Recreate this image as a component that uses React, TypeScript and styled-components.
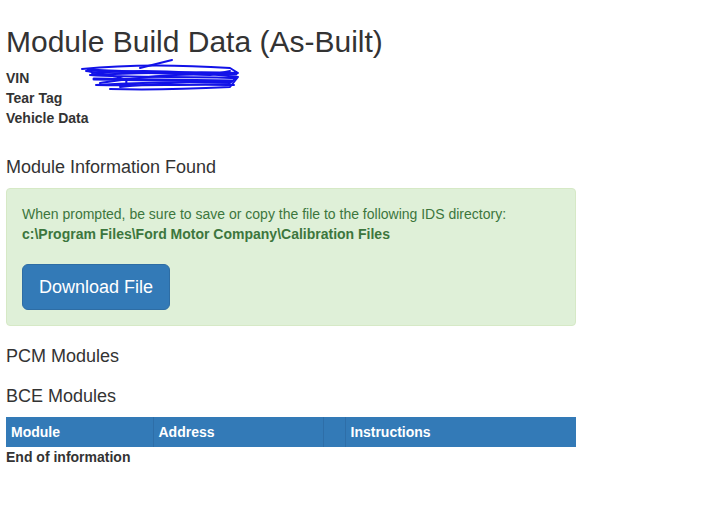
import React from 'react';
import styled, { createGlobalStyle } from 'styled-components';

const GlobalStyle = createGlobalStyle`
  body {
    margin: 0;
    background: #ffffff;
    font-family: "Liberation Sans", Arial, Helvetica, sans-serif;
    font-size: 14px;
    line-height: 20px;
    color: #333333;
  }
`;

const Page = styled.div`
  padding: 0 6px;
  width: 570px;
`;

const Title = styled.h1`
  margin: 25px 0 10px;
  font-size: 30px;
  font-weight: 400;
  line-height: 1.1;
  color: #333;
`;

const InfoList = styled.div`
  display: flex;
  flex-direction: column;
`;

const InfoRow = styled.div`
  display: flex;
  align-items: center;
  height: 20px;
  font-weight: 700;
  white-space: nowrap;
`;

const Label = styled.span`
  flex: none;
`;

const Section = styled.h3<{ $top: number }>`
  margin: ${(p) => p.$top}px 0 10px;
  font-size: 18px;
  font-weight: 400;
  line-height: 1.1;
  color: #333;
`;

const Alert = styled.div`
  background: #dff0d8;
  border: 1px solid #d6e9c6;
  border-radius: 4px;
  color: #3c763d;
  padding: 15px;
  margin-bottom: 21px;
`;

const AlertText = styled.p`
  margin: 0;
`;

const Path = styled.strong`
  display: block;
`;

const Button = styled.button`
  margin-top: 20px;
  display: inline-block;
  font-family: inherit;
  font-size: 18px;
  line-height: 24px;
  padding: 10px 16px;
  border-radius: 6px;
  border: 1px solid #2e6da4;
  background: #337ab7;
  color: #ffffff;
  cursor: pointer;
`;

const Table = styled.table`
  width: 100%;
  table-layout: fixed;
  border-collapse: collapse;
  margin-top: 11px;
`;

const Th = styled.th<{ $w?: number }>`
  box-sizing: border-box;
  background: #337ab7;
  color: #ffffff;
  text-align: left;
  font-weight: 700;
  height: 30px;
  padding: 0 5px;
  border-left: 1px solid #2e6ea8;
  width: ${(p) => (p.$w ? `${p.$w}px` : 'auto')};
  &:first-child {
    border-left: none;
  }
`;

const Footer = styled.div`
  font-weight: 700;
`;

const ScribbleMark = styled.svg`
  flex: none;
  margin-left: 50px;
  margin-top: -4px;
`;

const Scribble = () => (
  <ScribbleMark width="164" height="34" viewBox="0 0 162 34">
    <g fill="none" stroke="#1212e8" strokeWidth="2" strokeLinecap="round" strokeLinejoin="round">
      <path d="M2 10 C40 6 90 5 150 9 L158 14 C120 12 60 14 10 16 C50 19 110 17 156 19 L150 24 C100 22 50 24 16 26 C60 27 110 25 154 26" />
      <path d="M6 12 C30 16 60 20 40 28 C70 25 120 22 146 22" />
      <path d="M60 9 L92 1" />
      <path d="M20 24 C50 20 90 14 130 16 L150 12" />
      <path d="M12 14 C60 10 110 12 158 18 L150 28 C110 30 60 31 30 30" />
      <path d="M8 11 C50 13 100 15 156 15 M14 20 C60 21 110 21 152 22" strokeWidth="3" />
    </g>
  </ScribbleMark>
);

export default function App() {
  return (
    <Page>
      <GlobalStyle />
      <Title>Module Build Data (As-Built)</Title>
      <InfoList>
        <InfoRow>
          <Label>VIN</Label>
          <Scribble />
        </InfoRow>
        <InfoRow>
          <Label>Tear Tag</Label>
        </InfoRow>
        <InfoRow>
          <Label>Vehicle Data</Label>
        </InfoRow>
      </InfoList>
      <Section $top={30}>Module Information Found</Section>
      <Alert>
        <AlertText>When prompted, be sure to save or copy the file to the following IDS directory:</AlertText>
        <Path>c:\Program Files\Ford Motor Company\Calibration Files</Path>
        <Button>Download File</Button>
      </Alert>
      <Section $top={20}>PCM Modules</Section>
      <Section $top={20}>BCE Modules</Section>
      <Table>
        <thead>
          <tr>
            <Th $w={147}>Module</Th>
            <Th $w={170}>Address</Th>
            <Th $w={22}></Th>
            <Th>Instructions</Th>
          </tr>
        </thead>
      </Table>
      <Footer>End of information</Footer>
    </Page>
  );
}
